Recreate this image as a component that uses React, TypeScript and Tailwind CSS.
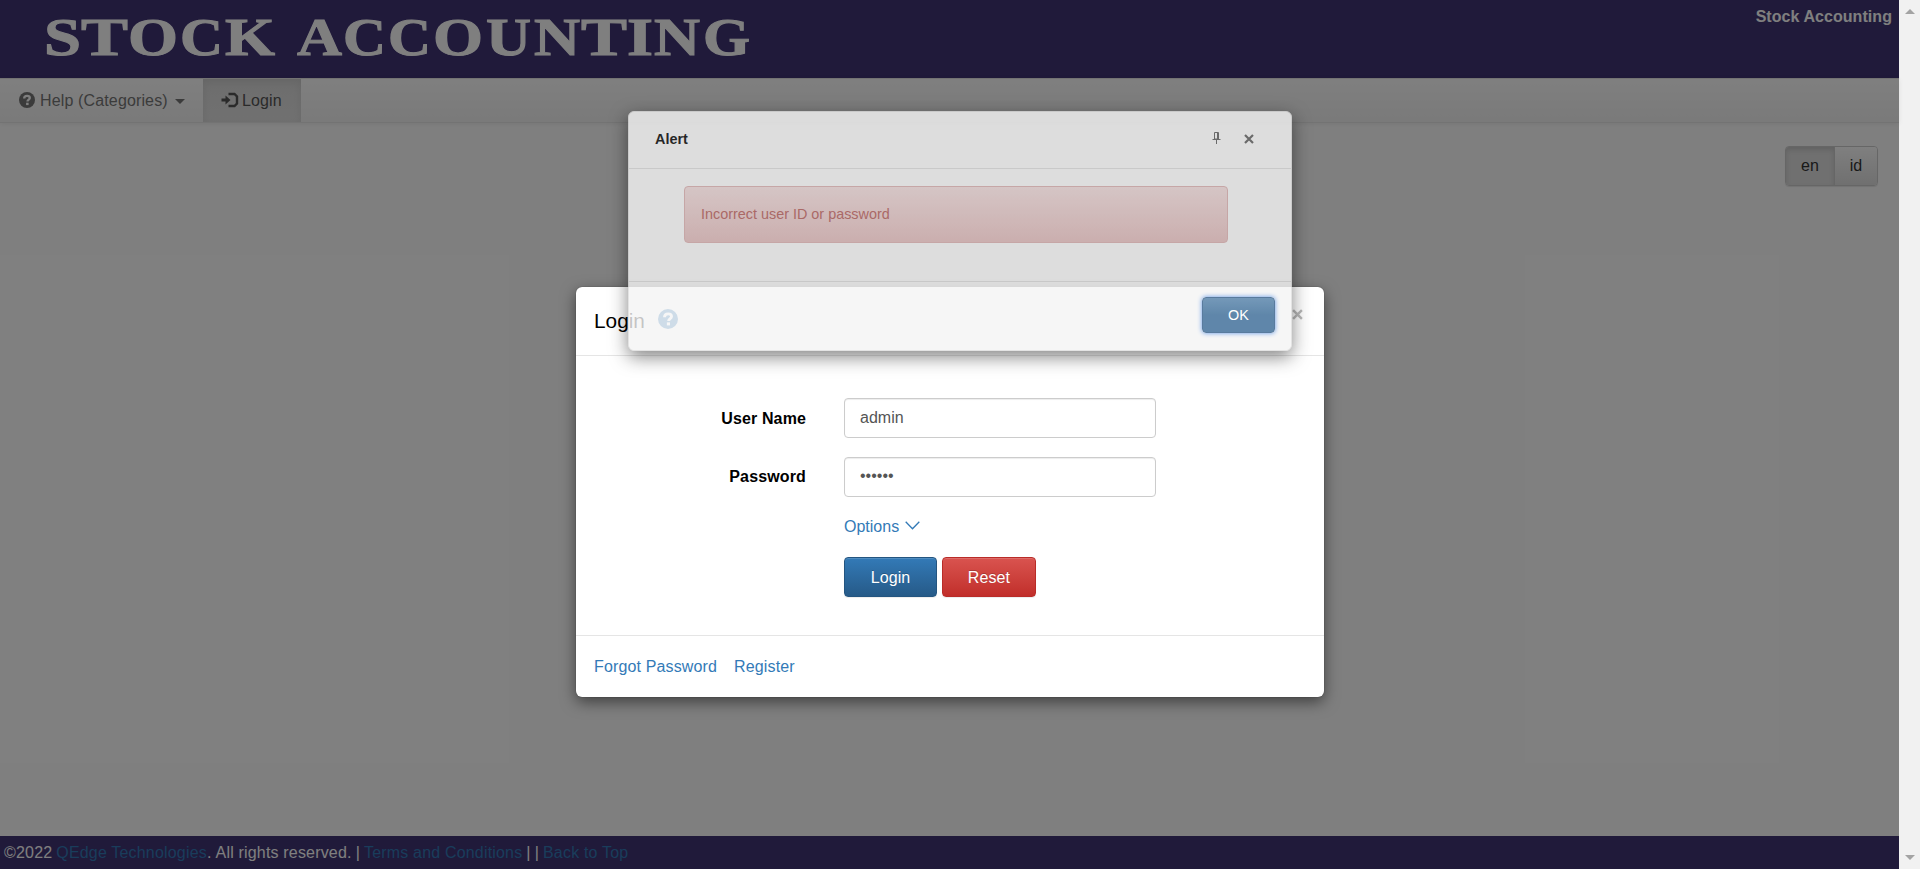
import React from "react";

function QuestionSign({ className }: { className?: string }) {
  return (
    <svg viewBox="0 0 16 16" className={className}>
      <circle cx="8" cy="8" r="8" fill="currentColor" />
      <path d="M5.2 6.500C5.200 4.500 6.400 3.900 8.100 3.900c1.600 0 2.700.8 2.700 2.100 0 1.700-2.300 1.600-2.300 3.600" fill="none" stroke="var(--mark)" strokeWidth="2.300" />
      <rect x="7.100" y="10.700" width="2.500" height="2.400" fill="var(--mark)" />
    </svg>
  );
}

function LogInSign() {
  return (
    <svg viewBox="0 0 18 16" className="mb-[2px] h-4 w-[18px] shrink-0">
      <path d="M0.500 6.500H4.500V3.500L9.500 8L4.500 12.500V9.500H0.500Z" fill="currentColor" />
      <path d="M7.500 2H13.500L16 4.500V11.500L13.500 14H7.500" fill="none" stroke="currentColor" strokeWidth="2.400" />
    </svg>
  );
}

function Cross({ className }: { className?: string }) {
  return (
    <svg viewBox="0 0 10 10" className={className}>
      <path d="M1 1L9 9M9 1L1 9" stroke="currentColor" strokeWidth="2.200" />
    </svg>
  );
}

const logoLetters: { glyph: string; x: number; width: number }[] = [
  { glyph: "S", x: 44, width: 37 },
  { glyph: "T", x: 81, width: 47 },
  { glyph: "O", x: 128, width: 50 },
  { glyph: "C", x: 180, width: 43 },
  { glyph: "K", x: 225, width: 50 },
  { glyph: "A", x: 297, width: 45 },
  { glyph: "C", x: 343, width: 43 },
  { glyph: "C", x: 388, width: 43 },
  { glyph: "O", x: 433, width: 50 },
  { glyph: "U", x: 486, width: 45 },
  { glyph: "N", x: 534, width: 46 },
  { glyph: "T", x: 581, width: 46 },
  { glyph: "I", x: 627, width: 26 },
  { glyph: "N", x: 654, width: 46 },
  { glyph: "G", x: 703, width: 47 },
];

function Header() {
  return (
    <header className="flex h-[78px] shrink-0 items-start justify-between bg-[#403474] pr-[7px]">
      <svg viewBox="0 0 780 78" className="h-[78px] w-[780px]" role="img" aria-label="Stock Accounting">
        <text y="54.500" fill="#fff" stroke="#fff" strokeWidth="1" fontFamily="'Liberation Serif', serif" fontWeight="bold" fontSize="52">
          {logoLetters.map((l) => (
            <tspan key={l.x} x={l.x} textLength={l.width} lengthAdjust="spacingAndGlyphs">{l.glyph}</tspan>
          ))}
        </text>
      </svg>
      <span className="pt-[5px] font-bold leading-[23px] tracking-[0.06px] text-white">Stock Accounting</span>
    </header>
  );
}

function NavBar() {
  return (
    <nav className="flex h-[45px] shrink-0 items-stretch border-y border-[#e7e7e7] bg-linear-to-b from-white to-[#f4f4f4] shadow-[0_1px_5px_rgba(0,0,0,0.075)]">
      <a className="flex w-[203px] items-center pl-[19px] text-[#777]">
        <QuestionSign className="mr-[5px] mb-[2px] h-4 w-4 [--mark:#fff]" />
        <span className="tracking-[0.14px]">Help (Categories)</span>
        <span className="mt-[2px] ml-[7px] border-x-[5px] border-t-[5px] border-x-transparent border-t-[#777]" />
      </a>
      <a className="flex w-[98px] items-center bg-linear-to-b from-[#dbdbdb] to-[#e2e2e2] pl-[18px] text-[#555] shadow-[inset_0_3px_9px_rgba(0,0,0,0.075)]">
        <LogInSign />
        <span className="ml-[3px] tracking-[0.1px]">Login</span>
      </a>
    </nav>
  );
}

function Footer() {
  return (
    <footer className="flex h-[33px] shrink-0 items-center gap-1 bg-[#403474] pl-1 tracking-[0.18px] text-white">
      <span>©2022</span>
      <span><a className="text-[#337ab7]">QEdge Technologies</a>.</span>
      <span>All rights reserved.</span>
      <span>|</span>
      <a className="text-[#337ab7]">Terms and Conditions</a>
      <span>|</span>
      <span>|</span>
      <a className="text-[#337ab7]">Back to Top</a>
    </footer>
  );
}

function ScrollBar() {
  return (
    <aside className="flex w-[21px] shrink-0 flex-col items-center justify-between bg-[#f1f1f1] py-[9px]">
      <span className="border-x-[5px] border-b-[5px] border-x-transparent border-b-[#a3a3a3]" />
      <span className="border-x-[5px] border-t-[5px] border-x-transparent border-t-[#a3a3a3]" />
    </aside>
  );
}

function LoginDialog() {
  return (
    <section className="absolute top-[287px] left-[576px] flex h-[410px] w-[748px] flex-col rounded-md bg-white text-black shadow-[0_5px_15px_rgba(0,0,0,0.5),0_0_1px_rgba(0,0,0,0.6)]">
      <div className="flex h-[69px] items-center border-b border-[#e5e5e5] px-[18px]">
        <h4 className="text-[20.8px]">Login</h4>
        <QuestionSign className="mb-[4px] ml-[13px] h-5 w-5 text-[#337ab7] [--mark:#fff]" />
        <Cross className="mr-[3px] mb-[13px] ml-auto h-[11px] w-[11px] text-[#b9b9b9]" />
      </div>
      <form className="flex flex-1 flex-col pt-[42px]">
        <div className="flex h-10 items-center">
          <label className="w-[230px] pt-px text-right font-bold tracking-[0.12px]">User Name</label>
          <div className="ml-[38px] h-10 w-[312px] rounded border border-[#ccc] px-[15px] leading-[37px] text-[#555] shadow-[inset_0_1px_1px_rgba(0,0,0,0.075)]">admin</div>
        </div>
        <div className="mt-[19px] flex h-10 items-center">
          <label className="w-[230px] text-right font-bold tracking-[0.14px]">Password</label>
          <div className="ml-[38px] flex h-10 w-[312px] items-center rounded border border-[#ccc] px-[15px] pb-[2px] text-[#555] shadow-[inset_0_1px_1px_rgba(0,0,0,0.075)]">••••••</div>
        </div>
        <a className="mt-[18px] ml-[268px] flex h-6 items-center text-[#337ab7]">
          Options
          <svg viewBox="0 0 15 9" className="ml-[6px] mb-[4px] h-[9px] w-[15px]">
            <path d="M0.700 0.700L7.500 7.700L14.300 0.700" fill="none" stroke="currentColor" strokeWidth="1.300" />
          </svg>
        </a>
        <div className="mt-[18px] ml-[268px] flex gap-[5px] text-white">
          <button type="button" className="h-10 w-[93px] rounded border border-[#245580] bg-linear-to-b from-[#337ab7] to-[#265a88] pt-px tracking-[0.1px] shadow-[inset_0_1px_0_rgba(255,255,255,0.15),0_1px_1px_rgba(0,0,0,0.075)] [text-shadow:0_-1px_0_rgba(0,0,0,0.2)]">Login</button>
          <button type="button" className="h-10 w-[94px] rounded border border-[#b92c28] bg-linear-to-b from-[#d9534f] to-[#c12e2a] pt-px tracking-[0.1px] shadow-[inset_0_1px_0_rgba(255,255,255,0.15),0_1px_1px_rgba(0,0,0,0.075)] [text-shadow:0_-1px_0_rgba(0,0,0,0.2)]">Reset</button>
        </div>
      </form>
      <div className="flex h-[62px] items-center gap-[17px] border-t border-[#e5e5e5] px-[18px] tracking-[0.14px] text-[#337ab7]">
        <a>Forgot Password</a>
        <a>Register</a>
      </div>
    </section>
  );
}

function AlertDialog() {
  return (
    <section className="absolute top-[111px] left-[628px] flex h-[240px] w-[664px] flex-col rounded-md border border-[#ddd] bg-[#f5f5f5] text-[14.4px] opacity-80 shadow-[0_6px_18px_rgba(0,0,0,0.6)]">
      <div className="flex h-[57px] items-center border-b border-[#dcdcdc] pr-[37px] pl-[26px]">
        <h4 className="text-[14.4px] font-bold text-[#111]">Alert</h4>
        <svg viewBox="0 0 9 12" className="mb-[4px] ml-auto h-3 w-[9px] text-[#666]">
          <path d="M2.500 0.500H6.500V7H2.500ZM0.500 7.500H8.500M4.500 7.500V12" fill="none" stroke="currentColor" />
          <path d="M5.500 1V7" stroke="currentColor" />
        </svg>
        <Cross className="mb-[3px] ml-[23px] h-[10px] w-[10px] text-[#666]" />
      </div>
      <div className="flex-1 px-[55px] pt-[17px]">
        <div className="flex h-[57px] w-[544px] items-center rounded border border-[#d8b0b0] bg-linear-to-b from-[#ebd7d7] to-[#debbbb] pl-[16px] text-[#b56461]">Incorrect user ID or password</div>
      </div>
      <div className="flex h-[69px] items-start justify-end rounded-b-md border-t border-[#dcdcdc] bg-[#f5f5f5] pt-[15px] pr-4">
        <button type="button" className="h-9 w-[73px] rounded border border-[#305b86] bg-linear-to-b from-[#5280a8] via-[#386995] to-[#386995] pt-px text-[14.4px] text-white shadow-[0_0_5px_#337ae0]">OK</button>
      </div>
    </section>
  );
}

export default function App() {
  return (
    <div className="relative flex h-[869px] w-[1920px] overflow-hidden bg-white font-['Liberation_Sans',Arial,sans-serif] text-base">
      <div className="relative flex w-[1899px] flex-col">
        <Header />
        <NavBar />
        <main className="flex flex-1 items-start justify-end pt-[23px] pr-[21px] text-[#333]">
          <div className="flex h-10 w-[93px] items-stretch overflow-hidden rounded border border-[#ccc] shadow-[0_1px_1px_rgba(0,0,0,0.1)]">
            <span className="flex w-[49px] items-center justify-center border-r border-[#ccc] bg-[#e0e0e0] shadow-[inset_0_3px_5px_rgba(0,0,0,0.125)]">en</span>
            <span className="flex flex-1 items-center justify-center bg-linear-to-b from-white to-[#e0e0e0]">id</span>
          </div>
        </main>
        <Footer />
        <div className="absolute inset-0 bg-black/50" />
      </div>
      <ScrollBar />
      <LoginDialog />
      <AlertDialog />
    </div>
  );
}
